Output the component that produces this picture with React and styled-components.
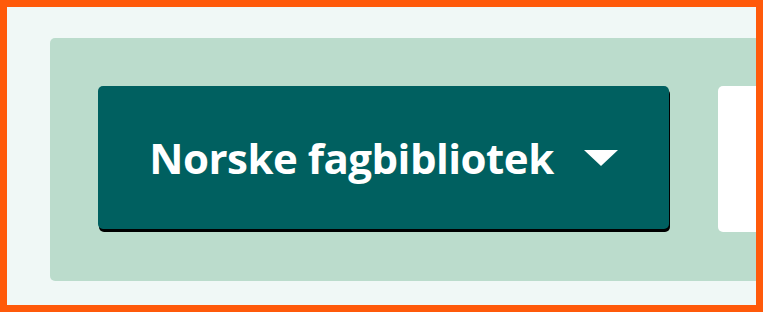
import React from "react";
import styled, { createGlobalStyle } from "styled-components";

const Global = createGlobalStyle`
  html, body { margin: 0; padding: 0; background: #ffffff; }
  * { box-sizing: border-box; }
`;

const Frame = styled.div`
  width: 763px;
  height: 312px;
  border: 7px solid #ff5a0a;
  background: #f0f8f6;
  padding: 31px 0 24px 43px;
  overflow: hidden;
  display: flex;
`;

const Panel = styled.div`
  flex: 1;
  background: #bbdccc;
  border-radius: 5px 0 0 5px;
  padding: 48px 0 0 48px;
  display: flex;
  align-items: flex-start;
  gap: 49px;
  overflow: hidden;
`;

const DropButton = styled.button`
  width: 571px;
  height: 143px;
  flex: none;
  background: #006060;
  border: none;
  border-radius: 5px;
  box-shadow: 1px 3px 0 #000;
  color: #ffffff;
  display: flex;
  align-items: center;
  justify-content: center;
  gap: 30px;
  font-family: "Open Sans", "Noto Sans", sans-serif;
  font-weight: 700;
  font-size: 42px;
  letter-spacing: -0.5px;
  padding: 0;
  cursor: pointer;
`;

const Label = styled.span`
  line-height: 1;
`;

const Caret = styled.span`
  width: 0;
  height: 0;
  border-left: 17.5px solid transparent;
  border-right: 17.5px solid transparent;
  border-top: 16px solid #ffffff;
`;

const Field = styled.div`
  flex: none;
  width: 200px;
  height: 146px;
  background: #ffffff;
  border-radius: 5px;
`;

export default function App() {
  return (
    <>
      <Global />
      <Frame>
        <Panel>
          <DropButton>
            <Label>Norske fagbibliotek</Label>
            <Caret />
          </DropButton>
          <Field />
        </Panel>
      </Frame>
    </>
  );
}
